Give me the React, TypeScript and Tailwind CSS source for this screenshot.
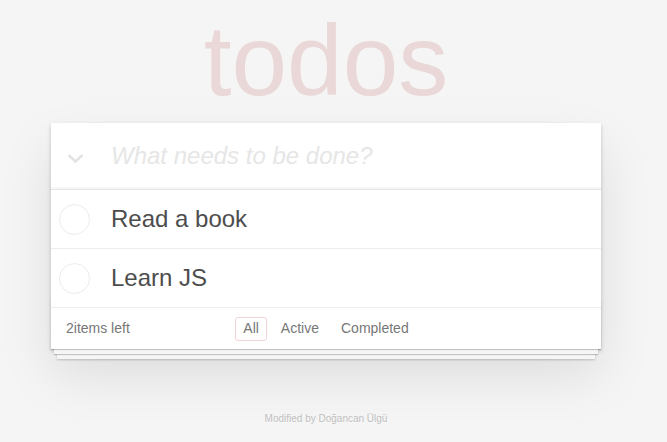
import React from "react";

export default function App() {
  const items = ["Read a book", "Learn JS"];
  return (
    <div className="min-h-screen w-full bg-[#f5f5f5] font-['Liberation_Sans',Arial,sans-serif] text-[14px] text-[#4d4d4d] antialiased">
      <div className="w-[652px] flex flex-col items-center">
        <h1 className="mt-[10px] h-[100px] leading-[100px] text-[100px] font-thin text-[rgba(175,47,47,0.15)] text-center">
          todos
        </h1>
        <section className="mt-[13px] w-[550px] bg-white shadow-[0_2px_4px_0_rgba(0,0,0,0.2),0_25px_50px_0_rgba(0,0,0,0.1)]">
          <header className="flex items-center h-[66px] shadow-[inset_0_-2px_1px_rgba(0,0,0,0.03)]">
            <div className="w-[60px] flex justify-start pl-[16px]">
              <svg width="17" height="11" viewBox="0 0 17 11" className="mt-[4px]">
                <polyline points="1.5,2 8.5,8.5 15.5,2" fill="none" stroke="#e3e3e3" strokeWidth="2.6" />
              </svg>
            </div>
            <span className="text-[24px] italic text-[#e6e6e6] leading-[34px]">What needs to be done?</span>
          </header>
          <ul className="border-t border-[#e6e6e6]">
            {items.map((t) => (
              <li key={t} className="flex items-center h-[59px] border-b border-[#ededed]">
                <div className="pl-[8px] w-[60px]">
                  <div className="w-[31px] h-[31px] rounded-full border border-[#ececec]" />
                </div>
                <span className="text-[24px] leading-[29px] text-[#4d4d4d] -mt-[1px]">{t}</span>
              </li>
            ))}
          </ul>
          <footer className="relative flex items-center h-[41px] px-[15px] text-[#777]">
            <div className="absolute left-0 right-0 bottom-0 h-[50px] overflow-hidden shadow-[0_1px_1px_rgba(0,0,0,0.2),0_8px_0_-3px_#f6f6f6,0_9px_1px_-3px_rgba(0,0,0,0.2),0_16px_0_-6px_#f6f6f6,0_17px_2px_-6px_rgba(0,0,0,0.2)]" />
            <span className="relative">2items left</span>
            <ul className="absolute left-0 right-0 top-0 bottom-0 flex items-center justify-center">
              <li className="mx-[3px] px-[7px] h-[24px] flex items-center rounded-[3px] border border-[rgba(175,47,47,0.2)]">All</li>
              <li className="mx-[3px] px-[7px] h-[24px] flex items-center rounded-[3px] border border-transparent">Active</li>
              <li className="mx-[3px] px-[7px] h-[24px] flex items-center rounded-[3px] border border-transparent">Completed</li>
            </ul>
          </footer>
        </section>
        <footer className="mt-[62px] text-[10px] text-[#bfbfbf] [text-shadow:0_1px_0_rgba(255,255,255,0.5)]">
          Modified by Doğancan Ülgü
        </footer>
      </div>
    </div>
  );
}
